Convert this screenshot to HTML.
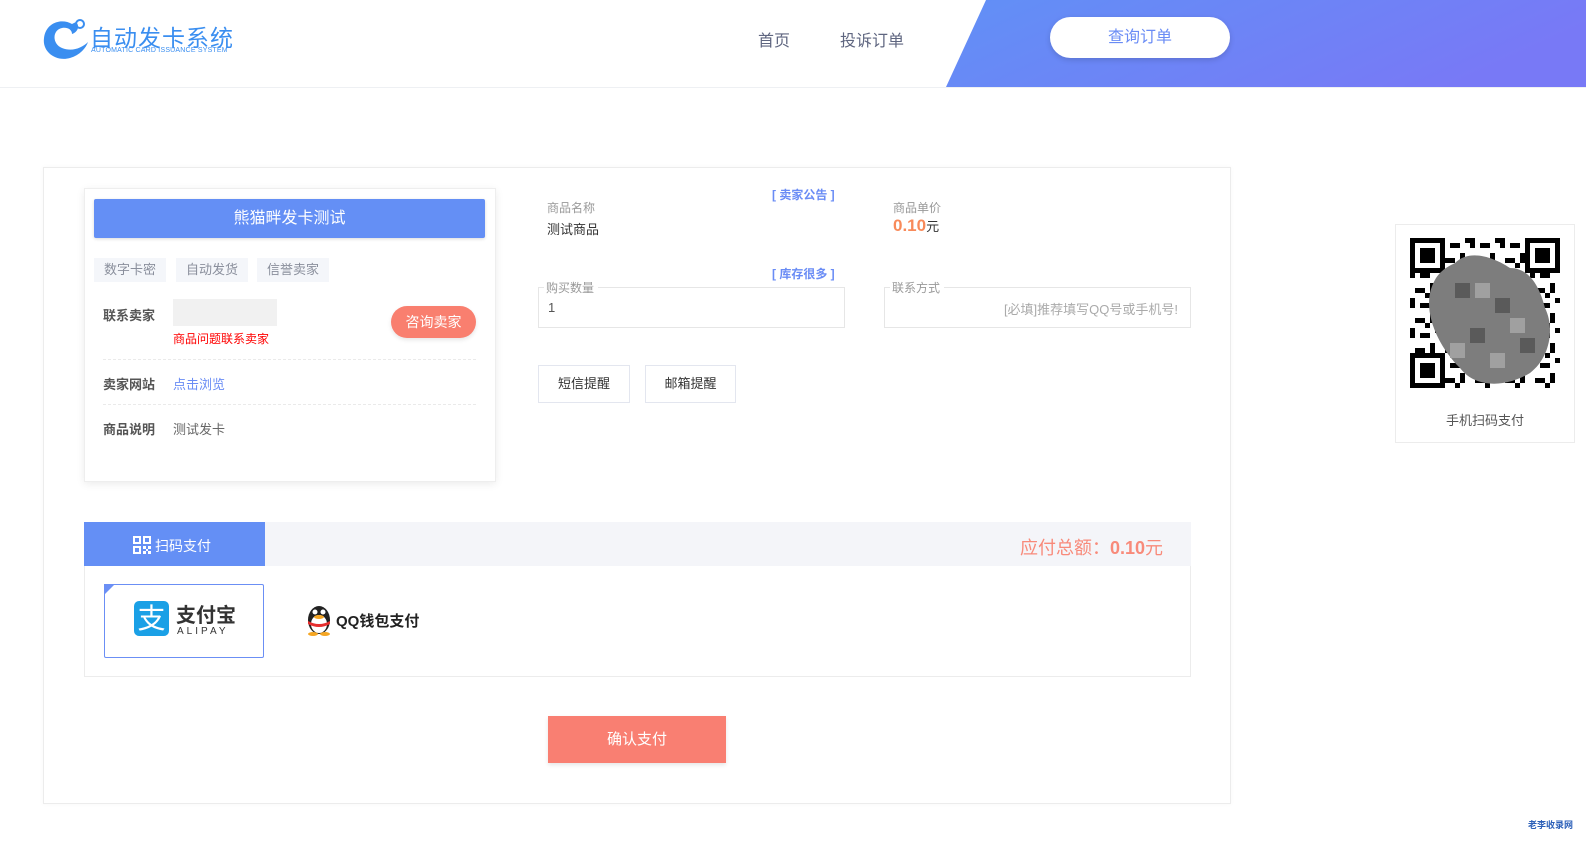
<!DOCTYPE html>
<html><head><meta charset="utf-8"><style>
*{margin:0;padding:0;box-sizing:border-box}
body{width:1586px;height:845px;background:#fff;position:relative;overflow:hidden;font-family:"Liberation Sans","Noto Sans CJK SC",sans-serif;color:#333}
.a{position:absolute}
.t{white-space:nowrap}
</style></head><body>
<div class="a" style="left:0;top:0;width:1586px;height:88px;border-bottom:1px solid #eef0f3"></div>
<svg class="a" style="left:0;top:0" width="1586" height="87"><defs><linearGradient id="g" x1="0" x2="1" y1="0" y2="0.3"><stop offset="0" stop-color="#6190f6"/><stop offset="1" stop-color="#7879f6"/></linearGradient></defs><polygon points="986,0 1586,0 1586,87 946,87" fill="url(#g)"/></svg>
<svg class="a" style="left:42px;top:18px" width="50" height="44" viewBox="0 0 50 44"><path d="M30 6 C20 0 4 4 2 20 C0 34 14 44 28 40 C38 37 44 30 46 24 C40 30 30 34 20 30 C10 26 10 12 20 10 C26 9 30 12 30 16 C36 14 38 8 34 4 Z" fill="#3a8ef0"/><circle cx="38" cy="6" r="4" fill="none" stroke="#3a8ef0" stroke-width="2"/></svg>
<div class="a t" style="left:90px;top:19px;font-size:23px;color:#3a8ef0;letter-spacing:1px">自动发卡系统</div>
<div class="a t" style="left:91px;top:47px;font-size:7px;color:#3a8ef0;letter-spacing:.2px">AUTOMATIC CARD ISSUANCE SYSTEM</div>
<div class="a t" style="left:758px;top:27px;font-size:16px;color:#5f6680">首页</div>
<div class="a t" style="left:840px;top:27px;font-size:16px;color:#5f6680">投诉订单</div>
<div class="a" style="left:1050px;top:17px;width:180px;height:41px;background:#fff;border-radius:21px;box-shadow:0 2px 6px rgba(0,0,0,.15);text-align:center;line-height:41px;font-size:16px;color:#6a8cf5">查询订单</div>
<div class="a" style="left:43px;top:167px;width:1188px;height:637px;border:1px solid #ececec;box-shadow:0 0 4px rgba(0,0,0,.04)"></div>
<div class="a" style="left:84px;top:188px;width:412px;height:294px;border:1px solid #eee;box-shadow:0 2px 8px rgba(0,0,0,.08);background:#fff"></div>
<div class="a" style="left:94px;top:199px;width:391px;height:39px;background:#648ff5;border-radius:2px;box-shadow:0 1px 3px rgba(0,0,0,.15);color:#fff;font-size:16px;text-align:center;line-height:39px">熊猫畔发卡测试</div>
<div class="a t" style="left:94px;top:258px;width:72px;height:24px;background:#f4f6fa;color:#8a8f9c;font-size:13px;line-height:24px;text-align:center">数字卡密</div>
<div class="a t" style="left:176px;top:258px;width:72px;height:24px;background:#f4f6fa;color:#8a8f9c;font-size:13px;line-height:24px;text-align:center">自动发货</div>
<div class="a t" style="left:257px;top:258px;width:72px;height:24px;background:#f4f6fa;color:#8a8f9c;font-size:13px;line-height:24px;text-align:center">信誉卖家</div>
<div class="a t" style="left:103px;top:305px;font-size:13px;font-weight:bold;color:#555">联系卖家</div>
<div class="a" style="left:173px;top:299px;width:104px;height:27px;background:#f1f1f1"></div>
<div class="a t" style="left:173px;top:330px;font-size:12px;color:#f00">商品问题联系卖家</div>
<div class="a" style="left:391px;top:306px;width:85px;height:32px;background:#f97f6f;border-radius:16px;color:#fff;font-size:14px;line-height:32px;text-align:center;box-shadow:0 2px 4px rgba(0,0,0,.1)">咨询卖家</div>
<div class="a" style="left:103px;top:359px;width:373px;border-top:1px dashed #eaeaea"></div>
<div class="a t" style="left:103px;top:374px;font-size:13px;font-weight:bold;color:#555">卖家网站</div>
<div class="a t" style="left:173px;top:374px;font-size:13px;color:#6a8cf5">点击浏览</div>
<div class="a" style="left:103px;top:404px;width:373px;border-top:1px dashed #eaeaea"></div>
<div class="a t" style="left:103px;top:419px;font-size:13px;font-weight:bold;color:#555">商品说明</div>
<div class="a t" style="left:173px;top:419px;font-size:13px;color:#666">测试发卡</div>
<div class="a t" style="left:772px;top:186px;font-size:12px;font-weight:bold;color:#6a8cf5">[ 卖家公告 ]</div>
<div class="a t" style="left:547px;top:199px;font-size:12px;color:#999">商品名称</div>
<div class="a t" style="left:547px;top:219px;font-size:13px;color:#333">测试商品</div>
<div class="a t" style="left:893px;top:199px;font-size:12px;color:#999">商品单价</div>
<div class="a t" style="left:893px;top:216px;font-size:17px;font-weight:bold;color:#f88a5a">0.10<span style="font-size:13px;font-weight:normal;color:#333">元</span></div>
<div class="a t" style="left:772px;top:265px;font-size:12px;font-weight:bold;color:#6a8cf5">[ 库存很多 ]</div>
<div class="a" style="left:538px;top:287px;width:307px;height:41px;border:1px solid #e6e6e6"></div>
<div class="a t" style="left:544px;top:279px;padding:0 4px 0 2px;background:#fff;font-size:12px;color:#999">购买数量</div>
<div class="a t" style="left:548px;top:300px;font-size:13px;color:#555">1</div>
<div class="a" style="left:884px;top:287px;width:307px;height:41px;border:1px solid #e6e6e6"></div>
<div class="a t" style="left:890px;top:279px;padding:0 4px 0 2px;background:#fff;font-size:12px;color:#999">联系方式</div>
<div class="a t" style="left:884px;top:299px;width:294px;text-align:right;font-size:13px;color:#aaa">[必填]推荐填写QQ号或手机号!</div>
<div class="a" style="left:538px;top:365px;width:92px;height:38px;border:1px solid #e3e6ef;font-size:13px;line-height:36px;text-align:center;color:#333">短信提醒</div>
<div class="a" style="left:645px;top:365px;width:91px;height:38px;border:1px solid #e3e6ef;font-size:13px;line-height:36px;text-align:center;color:#333">邮箱提醒</div>
<div class="a" style="left:84px;top:522px;width:1107px;height:155px;border:1px solid #ececec"></div>
<div class="a" style="left:84px;top:522px;width:1107px;height:44px;background:#f4f5f9"></div>
<div class="a" style="left:84px;top:522px;width:181px;height:44px;background:#648ff5"></div>
<svg class="a" style="left:133px;top:536px" width="18" height="18" viewBox="0 0 18 18" fill="#fff"><path d="M0 0h8v8H0zM2 2v4h4V2zM10 0h8v8h-8zM12 2v4h4V2zM0 10h8v8H0zM2 12v4h4v-4zM10 10h3v3h-3zM15 10h3v3h-3zM13 13h2v2h-2zM10 15h3v3h-3zM15 15h3v3h-3z"/></svg>
<div class="a t" style="left:155px;top:536px;font-size:14px;color:#fff">扫码支付</div>
<div class="a t" style="left:1020px;top:534px;font-size:18px;color:#f88a7a">应付总额：<b>0.10</b>元</div>
<div class="a" style="left:104px;top:584px;width:160px;height:74px;border:1px solid #6b8ff5;border-radius:2px"></div>
<svg class="a" style="left:104px;top:584px" width="12" height="12"><polygon points="0,0 11,0 0,11" fill="#6b8ff5"/></svg>
<div class="a" style="left:134px;top:601px;width:35px;height:35px;background:#1aa0e6;border-radius:5px;color:#fff;font-size:28px;line-height:35px;text-align:center">支</div>
<div class="a t" style="left:176px;top:599px;font-size:20px;font-weight:bold;color:#333">支付宝</div>
<div class="a t" style="left:177px;top:626px;font-size:10px;color:#333;letter-spacing:3px">ALIPAY</div>
<svg class="a" style="left:304px;top:602px" width="30" height="34" viewBox="0 0 30 34"><ellipse cx="15" cy="18" rx="11" ry="14" fill="#222"/><ellipse cx="15" cy="22" rx="8" ry="9" fill="#fff"/><circle cx="11" cy="10" r="2.5" fill="#fff"/><circle cx="19" cy="10" r="2.5" fill="#fff"/><ellipse cx="15" cy="15" rx="5" ry="2" fill="#f5a623"/><path d="M4 19 Q15 25 26 19 L26 22 Q15 28 4 22Z" fill="#e62e2e"/><ellipse cx="9" cy="32" rx="5" ry="2" fill="#f5a623"/><ellipse cx="21" cy="32" rx="5" ry="2" fill="#f5a623"/></svg>
<div class="a t" style="left:336px;top:610px;font-size:15px;font-weight:bold;color:#222">QQ钱包支付</div>
<div class="a" style="left:548px;top:716px;width:178px;height:47px;background:#f97f72;color:#fff;font-size:15px;text-align:center;line-height:47px;box-shadow:0 2px 4px rgba(0,0,0,.1)">确认支付</div>
<div class="a" style="left:1395px;top:224px;width:180px;height:219px;border:1px solid #ececec;background:#fff"></div>
<svg class="a" style="left:1410px;top:238px" width="150" height="150" viewBox="0 0 30 30">
<defs><pattern id="p" width="6" height="6" patternUnits="userSpaceOnUse"><rect x="0" y="0" width="1" height="2" fill="#000"/><rect x="2" y="1" width="2" height="1" fill="#000"/><rect x="4" y="3" width="1" height="2" fill="#000"/><rect x="1" y="4" width="2" height="1" fill="#000"/><rect x="5" y="0" width="1" height="1" fill="#000"/><rect x="3" y="5" width="1" height="1" fill="#000"/></pattern></defs>
<rect width="30" height="30" fill="url(#p)"/>
<g fill="#000"><rect x="0" y="0" width="7" height="7"/><rect x="23" y="0" width="7" height="7"/><rect x="0" y="23" width="7" height="7"/></g>
<g fill="#fff"><rect x="1" y="1" width="5" height="5"/><rect x="24" y="1" width="5" height="5"/><rect x="1" y="24" width="5" height="5"/></g>
<g fill="#000"><rect x="2" y="2" width="3" height="3"/><rect x="25" y="2" width="3" height="3"/><rect x="2" y="25" width="3" height="3"/></g>
<path d="M9 5 C12 2 17 4 20 6 C24 6 26 10 27 14 C29 18 28 24 24 27 C19 30 13 30 10 26 C6 22 3 16 4 11 C5 7 7 6 9 5Z" fill="#7d7d7d"/>
<g fill="#5a5a5a"><rect x="9" y="9" width="3" height="3"/><rect x="17" y="12" width="3" height="3"/><rect x="22" y="20" width="3" height="3"/><rect x="12" y="18" width="3" height="3"/></g>
<g fill="#a0a0a0"><rect x="13" y="9" width="3" height="3"/><rect x="20" y="16" width="3" height="3"/><rect x="8" y="21" width="3" height="3"/><rect x="16" y="23" width="3" height="3"/></g>
</svg>
<div class="a t" style="left:1395px;top:410px;width:180px;text-align:center;font-size:13px;color:#555">手机扫码支付</div>
<div class="a t" style="left:1528px;top:818px;font-size:9px;font-weight:bold;color:#2b5fb8">老李收录网</div>
</body></html>
